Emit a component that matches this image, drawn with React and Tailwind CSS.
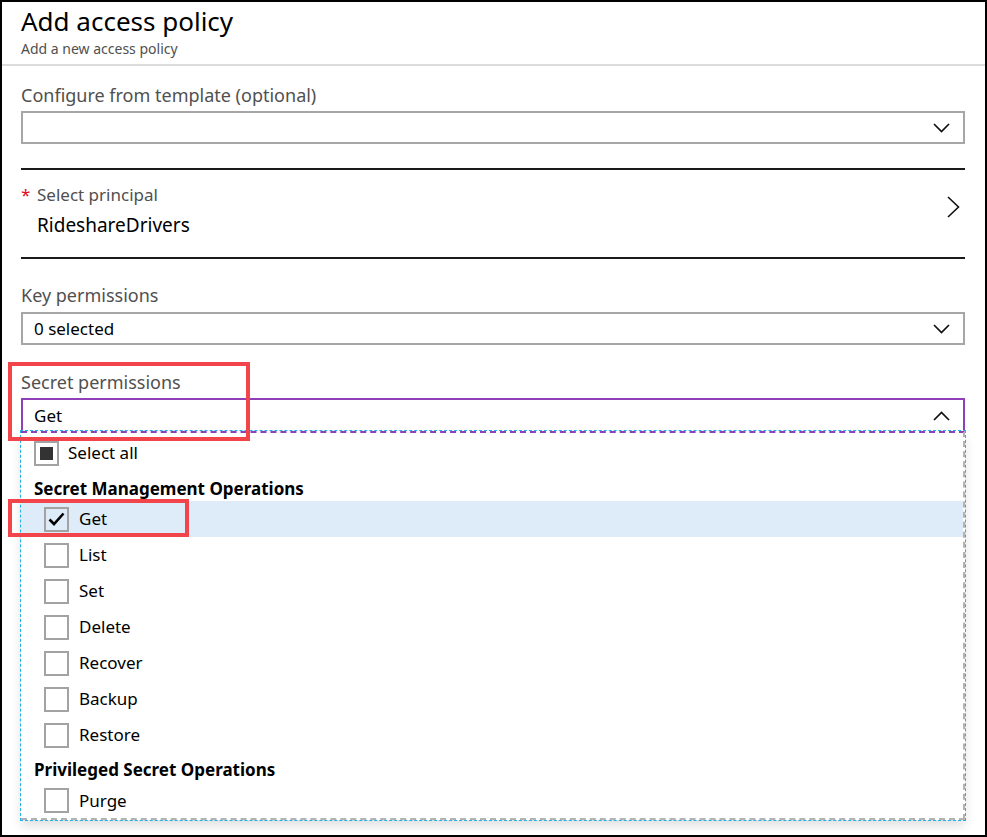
import React from 'react'

const font = { fontFamily: '"Segoe UI", "Noto Sans", sans-serif' }

function ChevronDown() {
  return (
    <svg width="17" height="10" viewBox="0 0 17 10" fill="none">
      <path d="M1 1 L8.5 8.5 L16 1" stroke="#111" strokeWidth="1.7" />
    </svg>
  )
}

function ChevronUp() {
  return (
    <svg width="17" height="10" viewBox="0 0 17 10" fill="none">
      <path d="M1 9 L8.5 1.5 L16 9" stroke="#111" strokeWidth="1.7" />
    </svg>
  )
}

function ChevronRight() {
  return (
    <svg width="13" height="22" viewBox="0 0 13 22" fill="none">
      <path d="M1 1 L11.5 11 L1 21" stroke="#111" strokeWidth="1.6" />
    </svg>
  )
}

function Checkbox({ checked }) {
  return (
    <div className="w-[25px] h-[25px] border-2 border-[#a3a3a3] flex items-center justify-center shrink-0">
      {checked && (
        <svg width="17" height="14" viewBox="0 0 17 14" fill="none">
          <path d="M1.5 7.5 L6 12 L15.5 1.5" stroke="#000" strokeWidth="2.6" />
        </svg>
      )}
    </div>
  )
}

function Item({ label, checked }) {
  return (
    <div className={'h-9 flex items-center pl-[23px] ' + (checked ? 'bg-[#deecf9]' : '')}>
      <Checkbox checked={checked} />
      <span className="ml-[10px] text-[17px] text-black">{label}</span>
    </div>
  )
}

export default function App() {
  const mgmt = ['List', 'Set', 'Delete', 'Recover', 'Backup', 'Restore']
  return (
    <div className="w-[987px] h-[837px] bg-white border-2 border-black relative overflow-hidden" style={font}>
      {/* header */}
      <div className="pt-[3px] pb-[6px] px-[19px] border-b-2 border-[#dcdcdc]">
        <div className="text-[26px] leading-[32px] text-black">Add access policy</div>
        <div className="mt-[3px] text-[14px] leading-[18px] text-[#505050]">Add a new access policy</div>
      </div>

      <div className="pl-[19px] pr-[20px]">
        {/* template */}
        <div className="mt-[17px] text-[18px] leading-[24px] text-[#505050]">Configure from template (optional)</div>
        <div className="mt-[4px] h-[33px] border-2 border-[#a6a6a6] flex items-center justify-end pr-[13px]">
          <ChevronDown />
        </div>

        <div className="mt-[24px] h-[2px] bg-[#1a1a1a]" />

        {/* principal */}
        <div className="flex items-center justify-between">
          <div>
            <div className="mt-[14px] h-[22px] flex items-center text-[17px] leading-[22px] text-[#505050]">
              <span className="text-[#e00b1c] w-[16px]">*</span>
              <span>Select principal</span>
            </div>
            <div className="mt-[7px] pl-[16px] text-[19px] leading-[24px] text-black">RideshareDrivers</div>
          </div>
          <div className="pr-[5px] pt-[6px]">
            <ChevronRight />
          </div>
        </div>

        <div className="mt-[20px] h-[2px] bg-[#1a1a1a]" />

        {/* key permissions */}
        <div className="mt-[24px] text-[18px] leading-[24px] text-[#505050]">Key permissions</div>
        <div className="mt-[5px] h-[33px] border-2 border-[#a6a6a6] flex items-center justify-between pl-[11px] pr-[13px]">
          <span className="text-[17px] text-black">0 selected</span>
          <ChevronDown />
        </div>

        {/* secret permissions */}
        <div className="mt-[25px] text-[18px] leading-[24px] text-[#505050]">Secret permissions</div>
        <div className="mt-[4px] h-[33px] border-2 border-b-0 border-[#8f3fb8] flex items-center justify-between pl-[11px] pr-[13px]">
          <span className="text-[17px] text-black">Get</span>
          <ChevronUp />
        </div>

        {/* dropdown panel */}
        <div className="h-[389px] border-t-2 border-dashed border-t-[#8f3fb8] border-r-2 border-r-[#b3b3b3] border-b-2 border-b-[#b3b3b3] outline-1 outline-dashed outline-[#22b1e8] shadow-[0_6px_10px_rgba(0,0,0,0.12)]">
          <div className="h-9 mt-[2px] flex items-center pl-[13px]">
            <div className="w-[25px] h-[25px] border-2 border-[#a3a3a3] flex items-center justify-center">
              <div className="w-[13px] h-[13px] bg-[#333]" />
            </div>
            <span className="ml-[9px] text-[17px] text-black">Select all</span>
          </div>
          <div className="h-[30px] pt-[7px] pl-[13px] text-[17px] leading-[22px] font-bold text-black">Secret Management Operations</div>
          <Item label="Get" checked />
          {mgmt.map((m) => (
            <Item key={m} label={m} />
          ))}
          <div className="h-[31px] pt-[6px] pl-[13px] text-[17px] leading-[22px] font-bold text-black">Privileged Secret Operations</div>
          <div className="h-[33px] flex items-center pl-[23px]">
            <Checkbox />
            <span className="ml-[10px] text-[17px] text-black">Purge</span>
          </div>
        </div>
      </div>

      {/* annotation boxes */}
      <div className="absolute left-[6px] top-[360px] w-[242px] h-[79px] border-4 border-[#f2454b]" />
      <div className="absolute left-[6px] top-[497px] w-[181px] h-[38px] border-4 border-[#f2454b]" />
    </div>
  )
}
